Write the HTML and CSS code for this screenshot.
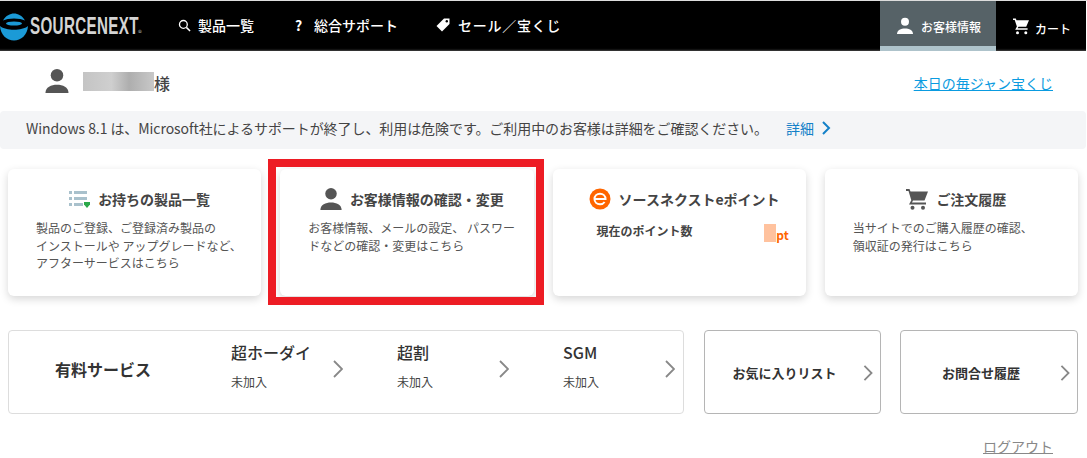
FILE: index.html
```html
<!DOCTYPE html>
<html lang="ja">
<head>
<meta charset="utf-8">
<title>お客様情報</title>
<link rel="stylesheet" href="styles.css">
</head>
<body>
<header class="header">
  <a class="logo">
    <svg class="logo-mark" viewBox="0 0 28 30" width="28" height="30">
      <path d="M3 8.500C6 3.500 10 1.500 14 1.500S22 3.500 25 8.500C20 5.800 8 5.800 3 8.500Z" fill="#1b9ad6"/>
      <ellipse cx="14" cy="11.500" rx="8" ry="2" fill="#1b9ad6"/>
      <path d="M0 14C6 19 22 19 28 14C27.500 23 21 28.500 14 28.500S.5 23 0 14Z" fill="#1b9ad6"/>
    </svg>
    <span class="logo-text">SOURCENEXT</span><span class="logo-reg">®</span>
  </a>
  <nav class="nav">
    <a class="nav-item nav-products">
      <svg viewBox="0 0 14 14" width="13" height="13"><circle cx="5.800" cy="5.800" r="4.200" fill="none" stroke="#fff" stroke-width="1.400"/><path d="M9 9l4 4" stroke="#fff" stroke-width="1.600"/></svg>
      <span>製品一覧</span>
    </a>
    <a class="nav-item nav-support">
      <span class="nav-q">?</span>
      <span>総合サポート</span>
    </a>
    <a class="nav-item nav-sale">
      <svg viewBox="0 0 16 16" width="16" height="16"><path d="M9 1.500h5.500V7L7 14.500 1.500 9Z" fill="#fff"/><circle cx="11.800" cy="4.200" r="1.200" fill="#000"/></svg>
      <span class="nav-sale-text">セール／宝くじ</span>
    </a>
  </nav>
  <div class="header-right">
    <a class="tab tab-active">
      <svg viewBox="0 0 18 18" width="18" height="18"><circle cx="9" cy="4.800" r="4" fill="#fff"/><path d="M1 17c0-4 4-5.600 8-5.600s8 1.600 8 5.600Z" fill="#fff"/></svg>
      <span>お客様情報</span>
    </a>
    <a class="tab tab-cart">
      <svg viewBox="0 0 18 18" width="18" height="18"><path d="M1 1.500h2.800l.7 1.700h12.500l-2.800 6.500H6.500l-.9 1.600h10v1.500H3.200l1.700-3.200L2.700 3H1Z" fill="#fff"/><circle cx="5.500" cy="15.700" r="1.500" fill="#fff"/><circle cx="13.800" cy="15.700" r="1.500" fill="#fff"/></svg>
      <span>カート</span>
    </a>
  </div>
</header>

<section class="greeting">
  <div class="user">
    <svg viewBox="0 0 24 26" width="24" height="25"><circle cx="12" cy="6.500" r="6.500" fill="#555"/><path d="M0 25c0-6 6-8.500 12-8.500S24 19 24 25Z" fill="#555"/></svg>
    <span class="user-name"><i class="blur"></i><span class="sama">様</span></span>
  </div>
  <a class="lottery">本日の毎ジャン宝くじ</a>
</section>

<section class="notice">
  <span class="notice-text">Windows 8.1 は、Microsoft社によるサポートが終了し、利用は危険です。ご利用中のお客様は詳細をご確認ください。</span>
  <a class="notice-link">詳細<svg viewBox="0 0 10 14" width="10" height="14"><path d="M2 1l6 6-6 6" fill="none" stroke="#1380c8" stroke-width="2"/></svg></a>
</section>

<main class="main">
  <section class="cards">
    <article class="card">
      <h2 class="card-title">
        <svg viewBox="0 0 21 18" width="21" height="18"><g fill="#a9c1cc"><rect x="0" y="1" width="3" height="3"/><rect x="5" y="1" width="13" height="3"/><rect x="0" y="7" width="3" height="3"/><rect x="5" y="7" width="13" height="3"/><rect x="0" y="13" width="3" height="3"/><rect x="5" y="13" width="9" height="3"/></g><path d="M15 12h6v2.500L18 18l-3-3.500Z" fill="#2aa84a"/></svg>
        お持ちの製品一覧
      </h2>
      <p class="card-text card-text-1">製品のご登録、ご登録済み製品の<br>インストールや アップグレードなど、<br>アフターサービスはこちら</p>
    </article>
    <article class="card">
      <h2 class="card-title">
        <svg viewBox="0 0 24 26" width="22" height="23"><circle cx="12" cy="6.500" r="6.500" fill="#555"/><path d="M0 25c0-6 6-8.500 12-8.500S24 19 24 25Z" fill="#555"/></svg>
        お客様情報の確認・変更
      </h2>
      <p class="card-text card-text-2">お客様情報、メールの設定、 パスワードなどの確認・変更はこちら</p>
    </article>
    <article class="card">
      <h2 class="card-title">
        <svg viewBox="0 0 22 22" width="22" height="22"><circle cx="11" cy="11" r="10.500" fill="#f60"/><path d="M5.500 11h11c0-3.200-2.400-5.300-5.500-5.300S5.500 8 5.500 11s2.400 5.300 5.500 5.300c2 0 3.600-.8 4.600-2.300" fill="none" stroke="#fff" stroke-width="2"/></svg>
        ソースネクストeポイント
      </h2>
      <div class="points">
        <span class="points-label">現在のポイント数</span>
        <span class="points-value"><i class="points-blur"></i>pt</span>
      </div>
    </article>
    <article class="card">
      <h2 class="card-title">
        <svg viewBox="0 0 22 22" width="22" height="22"><path d="M0 1h3.500l1 2.500H22l-3.500 9H7l-1 2h14v2H3l2.300-4.300L2.500 3H0Z" fill="#555"/><circle cx="6.500" cy="19.800" r="2" fill="#555"/><circle cx="17" cy="19.800" r="2" fill="#555"/></svg>
        ご注文履歴
      </h2>
      <p class="card-text card-text-4">当サイトでのご購入履歴の確認、<br>領収証の発行はこちら</p>
    </article>
  </section>

  <section class="links">
    <div class="services">
      <h3 class="services-title">有料サービス</h3>
      <a class="service">
        <div><div class="service-name">超ホーダイ</div><div class="service-state">未加入</div></div>
        <svg class="chev" viewBox="0 0 10 18" width="10" height="18"><path d="M1 1l8 8-8 8" fill="none" stroke="#888" stroke-width="1.800"/></svg>
      </a>
      <a class="service">
        <div><div class="service-name">超割</div><div class="service-state">未加入</div></div>
        <svg class="chev" viewBox="0 0 10 18" width="10" height="18"><path d="M1 1l8 8-8 8" fill="none" stroke="#888" stroke-width="1.800"/></svg>
      </a>
      <a class="service">
        <div><div class="service-name">SGM</div><div class="service-state">未加入</div></div>
        <svg class="chev" viewBox="0 0 10 18" width="10" height="18"><path d="M1 1l8 8-8 8" fill="none" stroke="#888" stroke-width="1.800"/></svg>
      </a>
    </div>
    <a class="link-box">
      <span>お気に入りリスト</span>
      <svg class="chev-box" viewBox="0 0 10 18" width="10" height="16"><path d="M1 1l8 8-8 8" fill="none" stroke="#888" stroke-width="2"/></svg>
    </a>
    <a class="link-box">
      <span>お問合せ履歴</span>
      <svg class="chev-box" viewBox="0 0 10 18" width="10" height="16"><path d="M1 1l8 8-8 8" fill="none" stroke="#888" stroke-width="2"/></svg>
    </a>
  </section>

  <div class="logout-row"><a class="logout">ログアウト</a></div>
</main>

<div class="highlight"></div>
</body>
</html>
```

FILE: styles.css
```css
* { box-sizing: border-box; }
html, body { margin: 0; padding: 0; overflow: hidden; height: 458px; }
body {
  position: relative;
  padding-right: 1px;
  background: #fff;
  border-top: 1px solid #ddd;
  color: #333;
  font-family: "Noto Sans CJK JP", "Noto Sans", sans-serif;
}
a { text-decoration: none; color: inherit; }
h2, h3, p { margin: 0; }

.header {
  display: flex;
  align-items: stretch;
  height: 50px;
  background: #000;
  color: #fff;
  box-shadow: inset 0 -3px 2px -2px #444;
}
.logo { display: flex; align-items: center; padding-top: 1px; width: 178px; flex: none; }
.logo-mark { flex: none; }
.logo-text {
  flex: none;
  width: 108px;
  margin-left: 2px;
  font-family: "Liberation Sans", sans-serif;
  font-weight: 700;
  font-size: 23px;
  line-height: 1;
  color: #d4d4d4;
  white-space: nowrap;
  transform: scaleX(.66);
  transform-origin: left center;
  letter-spacing: .5px;
}
.logo-reg { font-size: 8px; line-height: 8px; color: #aaa; margin-top: 12px; }

.nav { display: flex; align-items: center; font-size: 14px; font-weight: 500; padding-bottom: 2px; }
.nav-item { display: flex; align-items: center; gap: 7px; }
.nav-products { width: 117px; }
.nav-support { width: 140px; gap: 12px; }
.nav-q { font-weight: 700; font-size: 14px; width: 7px; }
.nav-sale { gap: 7px; }
.nav-sale-text { letter-spacing: .75px; }

.header-right { display: flex; margin-left: auto; }
.tab { display: flex; align-items: center; font-size: 12px; font-weight: 500; }
.tab-active {
  width: 116px;
  padding-left: 16px;
  padding-top: 5px;
  gap: 7px;
  background: #566267;
  border-bottom: 5px solid #aec3cb;
}
.tab-cart { padding-left: 16px; gap: 5px; width: 90px; }
.tab-cart span { padding-top: 4px; }

.greeting {
  display: flex;
  align-items: center;
  justify-content: space-between;
  height: 60px;
  padding: 0 33px 0 45px;
}
.user { display: flex; align-items: center; gap: 14px; }
.user-name { display: flex; align-items: center; font-size: 16px; font-weight: 500; color: #444; }
.sama { padding-top: 4px; }
.blur {
  display: block;
  width: 71px;
  height: 19px;
  margin-top: 1px;
  background: linear-gradient(90deg, #c4c4c4 0%, #cfcfcf 40%, #aeaeae 65%, #c8c8c8 100%);
}
.lottery { padding-top: 4px; font-size: 14px; color: #0a9be0; text-decoration: underline; }

.notice {
  display: flex;
  align-items: center;
  height: 38px;
  padding: 0 0 5px 26px;
  background: #f4f5f7;
  border-radius: 4px;
  font-size: 14px;
  color: #444;
}
.notice-text { letter-spacing: -.07px; }
.notice-link { display: flex; align-items: center; gap: 7px; margin-left: 18px; color: #1380c8; }

.main { padding: 20px 8px 0; }
.cards { display: grid; grid-template-columns: repeat(4, 1fr); gap: 19px; }
.card {
  height: 127px;
  padding: 18px 0 0;
  background: #fff;
  border-radius: 6px;
  box-shadow: 0 3px 8px rgba(0,0,0,.16);
}
.card-title {
  display: flex;
  align-items: center;
  justify-content: center;
  gap: 8px;
  height: 24px;
  padding-left: 10px;
  font-size: 14px;
  font-weight: 700;
  color: #444;
}
.card-text { font-size: 12px; line-height: 17.5px; color: #555; margin-top: 8px; }
.card-text-1 { padding: 0 0 0 28px; }
.card-text-2 { padding: 0 16px 0 28px; }
.card-text-4 { padding: 0 20px 0 28px; }
.points {
  display: flex;
  justify-content: space-between;
  align-items: flex-start;
  padding: 11px 17px 0 44px;
}
.points-label { font-size: 12px; font-weight: 700; color: #444; line-height: 18px; }
.points-value {
  display: flex;
  align-items: flex-end;
  margin-top: 2px;
  font-size: 12px;
  font-weight: 700;
  line-height: 15px;
  color: #f60;
}
.points-blur { display: block; width: 12px; height: 18px; background: #ffc29e; }

.links { display: flex; margin-top: 34px; height: 84px; }
.services {
  display: flex;
  align-items: flex-start;
  gap: 54px;
  width: 676px;
  border: 1px solid #ddd;
  border-radius: 4px;
}
.services-title {
  flex: none;
  width: 168px;
  padding: 17px 0 0 46px;
  font-size: 16px;
  font-weight: 700;
  color: #333;
  line-height: 43px;
}
.service {
  flex: none;
  display: flex;
  justify-content: space-between;
  width: 112px;
  padding: 9px 0 0;
}
.service-name { font-size: 16px; font-weight: 500; line-height: 24px; color: #333; }
.service-state { font-size: 12px; line-height: 18px; margin-top: 9px; color: #444; }
.chev { margin-top: 20px; }
.link-box {
  display: flex;
  align-items: center;
  justify-content: center;
  position: relative;
  height: 84px;
  border: 1px solid #b5b5b5;
  border-radius: 4px;
  font-size: 13px;
  font-weight: 700;
  color: #333;
}
.link-box:nth-child(2) { width: 177px; margin-left: 20px; }
.link-box:nth-child(3) { width: 178px; margin-left: 19px; }
.link-box span { margin-right: 16px; }
.chev-box { position: absolute; right: 7px; top: 34px; }

.logout-row { display: flex; justify-content: flex-end; margin-top: 22px; padding-right: 25px; }
.logout { font-size: 14px; color: #888; text-decoration: underline; line-height: 20px; }

.highlight {
  position: absolute;
  left: 268px;
  top: 158px;
  width: 276px;
  height: 146px;
  border: 8px solid #ed1c24;
  pointer-events: none;
}
```
